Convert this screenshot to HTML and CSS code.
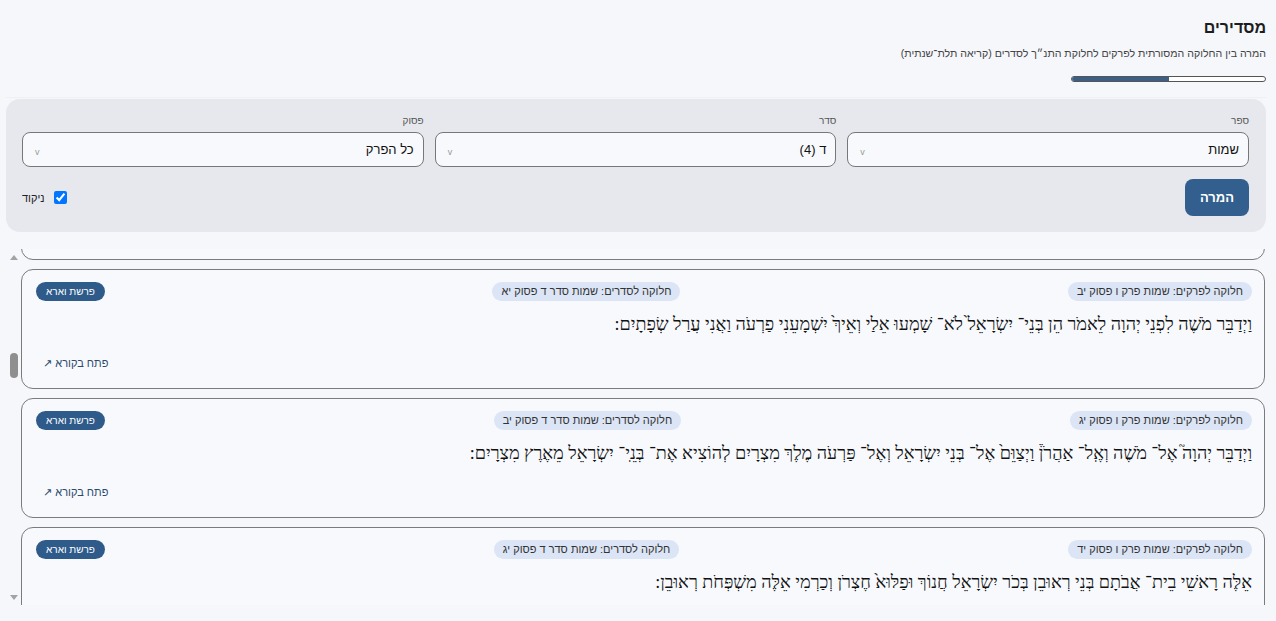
FILE: index.html
```html
<!DOCTYPE html>
<html lang="he" dir="rtl">
<head>
    <meta charset="UTF-8">
    <title>מסדירים</title>
    <link rel="stylesheet" href="styles.css">
</head>
<body>
<div class="page">
    <header class="page-head">
        <h1>מסדירים</h1>
        <p class="subtitle">המרה בין החלוקה המסורתית לפרקים לחלוקת התנ״ך לסדרים (קריאה תלת־שנתית)</p>
        <div class="progress"><div class="progress-fill" style="width: 50%"></div></div>
    </header>

    <section class="filters">
        <div class="fields">
            <div class="field">
                <span class="field-label">ספר</span>
                <div class="select"><span class="value">שמות</span><span class="chev">v</span></div>
            </div>
            <div class="field">
                <span class="field-label">סדר</span>
                <div class="select"><span class="value">ד (4)</span><span class="chev">v</span></div>
            </div>
            <div class="field">
                <span class="field-label">פסוק</span>
                <div class="select"><span class="value">כל הפרק</span><span class="chev">v</span></div>
            </div>
        </div>
        <div class="actions">
            <button class="convert-btn">המרה</button>
            <label class="niqqud"><input type="checkbox" checked> ניקוד</label>
        </div>
    </section>

    <div class="results-wrap">
        <div class="results" id="results">
            <article class="card">
                <div class="card-top">
                    <span class="chip">חלוקה לפרקים: שמות פרק ו פסוק יא</span>
                    <span class="chip">חלוקה לסדרים: שמות סדר ד פסוק י</span>
                    <span class="parasha">פרשת וארא</span>
                </div>
                <p class="verse">בֹּא דַבֵּר אֶל־ פַּרְעֹה מֶלֶךְ מִצְרָיִם וִישַׁלַּח אֶת־ בְּנֵי־ יִשְׂרָאֵל מֵאַרְצוֹ:</p>
                <div class="card-foot"><a href="#">פתח בקורא ↗</a></div>
            </article>
            <article class="card">
                <div class="card-top">
                    <span class="chip">חלוקה לפרקים: שמות פרק ו פסוק יב</span>
                    <span class="chip">חלוקה לסדרים: שמות סדר ד פסוק יא</span>
                    <span class="parasha">פרשת וארא</span>
                </div>
                <p class="verse">וַיְדַבֵּר מֹשֶׁה לִפְנֵי יְהוָה לֵאמֹר הֵן בְּנֵי־ יִשְׂרָאֵל֙ לֹא־ שָׁמְעוּ אֵלַי וְאֵיךְ֙ יִשְׁמָעֵנִי פַרְעֹה וַאֲנִי עֲרַל שְׂפָתָיִם:</p>
                <div class="card-foot"><a href="#">פתח בקורא ↗</a></div>
            </article>
            <article class="card">
                <div class="card-top">
                    <span class="chip">חלוקה לפרקים: שמות פרק ו פסוק יג</span>
                    <span class="chip">חלוקה לסדרים: שמות סדר ד פסוק יב</span>
                    <span class="parasha">פרשת וארא</span>
                </div>
                <p class="verse">וַיְדַבֵּר יְהוָה֮ אֶל־ מֹשֶׁה וְאֶֽל־ אַהֲרֹן֒ וַיְצַוֵּם֙ אֶל־ בְּנֵי יִשְׂרָאֵל וְאֶל־ פַּרְעֹה מֶלֶךְ מִצְרָיִם לְהוֹצִיא אֶת־ בְּנֵֽי־ יִשְׂרָאֵל מֵאֶרֶץ מִצְרָיִם:</p>
                <div class="card-foot"><a href="#">פתח בקורא ↗</a></div>
            </article>
            <article class="card">
                <div class="card-top">
                    <span class="chip">חלוקה לפרקים: שמות פרק ו פסוק יד</span>
                    <span class="chip">חלוקה לסדרים: שמות סדר ד פסוק יג</span>
                    <span class="parasha">פרשת וארא</span>
                </div>
                <p class="verse">אֵלֶּה רָאשֵׁי בֵית־ אֲבֹתָם בְּנֵי רְאוּבֵן בְּכֹר יִשְׂרָאֵל חֲנוֹךְ וּפַלּוּא֙ חֶצְרֹן וְכַרְמִי אֵלֶּה מִשְׁפְּחֹת רְאוּבֵן:</p>
                <div class="card-foot"><a href="#">פתח בקורא ↗</a></div>
            </article>
        </div>
        <div class="fake-scroll">
            <span class="arrow up"></span>
            <span class="track"><span class="thumb"></span></span>
            <span class="arrow down"></span>
        </div>
    </div>
</div>
<script src="script.js"></script>
</body>
</html>
```

FILE: styles.css
```css
* { box-sizing: border-box; }
body {
    margin: 0;
    font-family: "Liberation Sans", "DejaVu Sans", sans-serif;
    background: #f5f7fb;
    color: #222;
}
.page {
    padding: 0 10px 0 6px;
}
.page-head {
    padding: 16px 0 15px;
    border-bottom: 1px solid #eef0f4;
}
.page-head h1 {
    margin: 0;
    font-size: 16px;
    line-height: 24px;
    font-weight: bold;
    color: #1d1d1d;
}
.subtitle {
    margin: 6px 0 0;
    font-size: 10.6px;
    line-height: 14px;
    color: #444;
}
.progress {
    direction: ltr;
    width: 195px;
    height: 6px;
    margin-top: 16px;
    border: 1px solid #555;
    border-radius: 3px;
    background: #fff;
    overflow: hidden;
}
.progress-fill {
    height: 100%;
    background: #3b5f86;
}
.filters {
    margin-top: 1px;
    background: #e6e8ed;
    border-radius: 14px;
    padding: 15px 17px 16px 16px;
}
.fields {
    display: grid;
    grid-template-columns: 1fr 1fr 1fr;
    gap: 11px;
}
.field {
    display: flex;
    flex-direction: column;
}
.field-label {
    font-size: 10px;
    line-height: 14px;
    color: #555;
    margin-bottom: 4px;
}
.select {
    display: flex;
    align-items: center;
    justify-content: space-between;
    height: 35px;
    padding: 0 9px 0 12px;
    background: #f7f9fc;
    border: 1px solid #777;
    border-radius: 8px;
    font-size: 13px;
    color: #111;
}
.select .value {
    line-height: 18px;
}
.chev {
    font-size: 9px;
    line-height: 12px;
    color: #999;
    padding-top: 4px;
}
.actions {
    display: flex;
    align-items: center;
    justify-content: space-between;
    margin-top: 12px;
}
.convert-btn {
    height: 37px;
    padding: 0 15px;
    border: none;
    border-radius: 8px;
    background: #335f8e;
    color: #fff;
    font-family: inherit;
    font-weight: bold;
    font-size: 13px;
    line-height: 16px;
}
.niqqud {
    display: flex;
    align-items: center;
    gap: 9px;
    font-size: 11px;
    color: #222;
}
.niqqud input {
    margin: 0;
    width: 13px;
    height: 13px;
}
.results-wrap {
    display: flex;
    margin-top: 17px;
    height: 356px;
}
.results {
    flex: 1;
    overflow: hidden;
    display: flex;
    flex-direction: column;
    gap: 9px;
    padding-right: 1px;
}
.card {
    flex-shrink: 0;
    background: #f7f9fd;
    border: 1px solid #7b7b7b;
    border-radius: 12px;
    padding: 12px 12px 17px 14px;
}
.card-top {
    display: flex;
    justify-content: space-between;
    align-items: center;
}
.chip {
    background: #dbe5f5;
    border-radius: 10px;
    padding: 0 9px;
    height: 19px;
    line-height: 19px;
    font-size: 11px;
    color: #333;
}
.parasha {
    background: #2f5b8a;
    color: #fff;
    border-radius: 10px;
    padding: 0 10px;
    height: 19px;
    line-height: 19px;
    font-size: 10px;
}
.verse {
    margin: 10px 0 0;
    font-family: "Liberation Serif", "DejaVu Serif", serif;
    font-size: 18px;
    line-height: 26px;
    color: #111;
}
.card-foot {
    display: flex;
    justify-content: flex-end;
    margin-top: 18px;
    padding-left: 7px;
}
.card-foot a {
    font-size: 11px;
    line-height: 16px;
    color: #2d4a6b;
    text-decoration: none;
}
.fake-scroll {
    width: 15px;
    display: flex;
    flex-direction: column;
    align-items: center;
}
.arrow {
    width: 0;
    height: 0;
    border-left: 4px solid transparent;
    border-right: 4px solid transparent;
}
.arrow.up {
    margin-top: 6px;
    border-bottom: 5px solid #a3a3a3;
}
.arrow.down {
    margin-bottom: 5px;
    border-top: 5px solid #a3a3a3;
}
.track {
    flex: 1;
    width: 100%;
    display: flex;
    justify-content: center;
}
.thumb {
    width: 8px;
    height: 25px;
    margin-top: 93px;
    border-radius: 4px;
    background: #8f8f8f;
}
```

FILE: script.js
```js
// Liste so scrollen, dass der erste volle Eintrag pasuk 12 ist
const results = document.getElementById("results");
results.scrollTop = 109;
```
